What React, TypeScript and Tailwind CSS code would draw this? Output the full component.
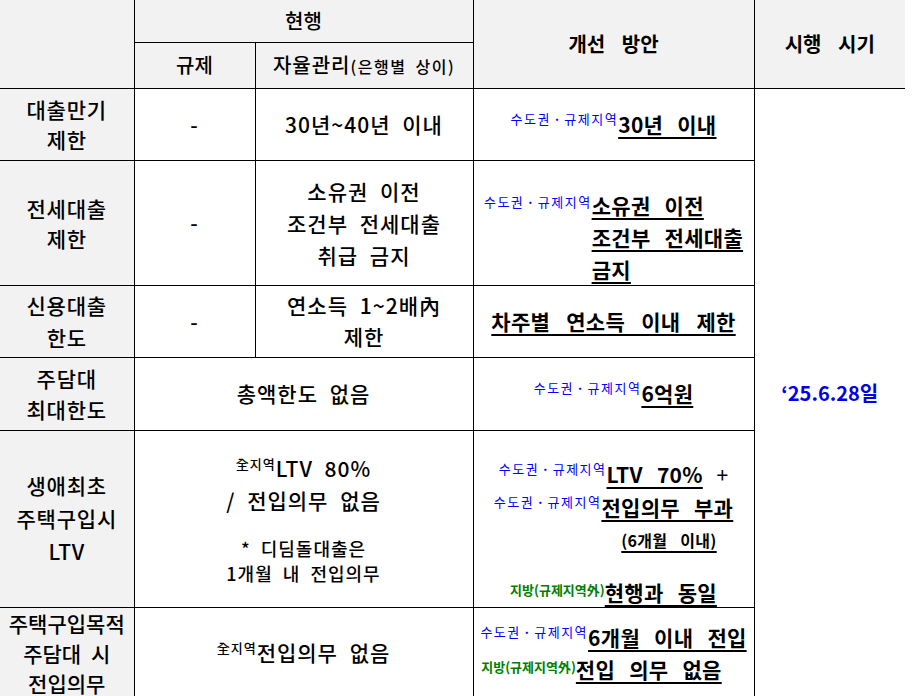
import React from "react";

const Lbl = ({ className = "" }: { className?: string }) => (
  <span className={"text-[13px] leading-none font-normal text-[#0000ff] tracking-[1.5px] [word-spacing:0px] align-[9px] " + className}>
    수도권<span className="font-bold">ㆍ</span>규제지역
  </span>
);

const GLbl = ({ className = "" }: { className?: string }) => (
  <span className={"text-[13px] leading-none font-bold text-[#008000] tracking-[0px] [word-spacing:0px] align-[6px] " + className}>
    지방(규제지역外)
  </span>
);

const U = ({ children, className = "" }: { children: React.ReactNode; className?: string }) => (
  <span className={"font-bold tracking-[0.3px] underline decoration-[1.5px] underline-offset-[4px] [word-spacing:9px] " + className}>
    {children}
  </span>
);

export default function App() {
  const hd = "bg-[#f2f2f2] border-b border-r border-black p-0 text-center align-middle";
  const lc = "bg-[#f2f2f2] border-b border-r border-black p-0 text-center align-middle text-[21px] font-medium tracking-[0.8px] leading-[30px] [word-spacing:5px]";
  const c = "border-b border-r border-black p-0 text-center align-middle text-[21px] font-medium tracking-[1px] leading-[31px] [word-spacing:6px]";
  return (
    <div className="w-[915px] h-[696px] bg-white text-black [font-family:'Noto_Sans_CJK_KR','Noto_Sans',sans-serif]">
      <table className="border-collapse table-fixed w-[905px]">
        <colgroup>
          <col className="w-[134px]" />
          <col className="w-[121px]" />
          <col className="w-[218px]" />
          <col className="w-[281px]" />
          <col className="w-[151px]" />
        </colgroup>
        <tbody>
          <tr className="h-[42px]">
            <td rowSpan={2} className={hd}></td>
            <td colSpan={2} className={hd + " text-[20px] font-medium"}>현행</td>
            <td rowSpan={2} className={hd + " text-[20px] font-bold [word-spacing:12px]"}>개선 방안</td>
            <td rowSpan={2} className={"bg-[#f2f2f2] border-b border-black p-0 text-center align-middle text-[20px] font-bold [word-spacing:12px]"}>
              시행 시기
            </td>
          </tr>
          <tr className="h-[46px]">
            <td className={hd + " text-[20px] font-medium"}>규제</td>
            <td className={hd + " text-[20px] font-medium tracking-[1px]"}>
              자율관리<span className="text-[16px] tracking-[1.5px] [word-spacing:4px]">(은행별 상이)</span>
            </td>
          </tr>

          <tr className="h-[72px]">
            <td className={lc}>대출만기<br />제한</td>
            <td className={c}>-</td>
            <td className={c}>30년~40년 이내</td>
            <td className={c}>
              <Lbl />
              <U>30년 이내</U>
            </td>
            <td rowSpan={6} className="border-b border-black p-0 text-center align-middle text-[20px] font-bold text-[#0000ee]">
              ‘25.6.28일
            </td>
          </tr>

          <tr className="h-[125px]">
            <td className={lc}>전세대출<br />제한</td>
            <td className={c}>-</td>
            <td className={c + " leading-[32px]"}>소유권 이전<br />조건부 전세대출<br />취급 금지</td>
            <td className="border-b border-r border-black p-0 align-bottom text-[21px]">
              <div className="flex justify-center items-start">
                <span className="leading-[18px]">
                  <Lbl className="align-baseline" />
                </span>
                <div className="text-left leading-[32px]">
                  <U>소유권 이전</U>
                  <br />
                  <U>조건부 전세대출</U>
                  <br />
                  <U>금지</U>
                </div>
              </div>
            </td>
          </tr>

          <tr className="h-[72px]">
            <td className={lc + " leading-[32px]"}>신용대출<br />한도</td>
            <td className={c}>-</td>
            <td className={c + " leading-[30px]"}>연소득 1~2배內<br />제한</td>
            <td className={c}>
              <U className="[word-spacing:11px]">차주별 연소득 이내 제한</U>
            </td>
          </tr>

          <tr className="h-[73px]">
            <td className={lc + " leading-[31px]"}>주담대<br />최대한도</td>
            <td colSpan={2} className={c}>총액한도 없음</td>
            <td className={c}>
              <Lbl />
              <U>6억원</U>
            </td>
          </tr>

          <tr className="h-[177px]">
            <td className={lc + " leading-[33px]"}>생애최초<br />주택구입시<br />LTV</td>
            <td colSpan={2} className={c}>
              <div className="leading-[32px]">
                <span className="text-[13px] leading-none align-[8px] tracking-[1px]">全지역</span>LTV 80%
                <br />/ 전입의무 없음
              </div>
              <div className="mt-[20px] text-[18px] leading-[25px] [word-spacing:5px]">
                * 디딤돌대출은
                <br />
                1개월 내 전입의무
              </div>
            </td>
            <td className="border-b border-r border-black p-0 align-top text-center text-[21px] pt-[27px]">
              <div className="leading-[33px] [word-spacing:9px]">
                <Lbl />
                <U>LTV 70%</U> +
              </div>
              <div className="leading-[33px]">
                <Lbl />
                <U>전입의무 부과</U>
              </div>
              <div className="leading-[29px] pl-[111px]">
                <U className="text-[16px] [word-spacing:4px]">(6개월 이내)</U>
              </div>
              <div className="h-[22px]" />
              <div className="leading-[30px]">
                <GLbl />
                <U>현행과 동일</U>
              </div>
            </td>
          </tr>

          <tr className="h-[86px]">
            <td className={lc + " text-[18px] tracking-[0px] leading-[30px]"}>주택구입목적<br />주담대 시<br />전입의무</td>
            <td colSpan={2} className={c}>
              <span className="text-[13px] leading-none align-[8px] tracking-[1px]">全지역</span>전입의무 없음
            </td>
            <td className={c + " leading-[32px]"}>
              <div>
                <Lbl />
                <U>6개월 이내 전입</U>
              </div>
              <div className="pr-[24px]">
                <GLbl />
                <U>전입 의무 없음</U>
              </div>
            </td>
          </tr>
        </tbody>
      </table>
    </div>
  );
}
